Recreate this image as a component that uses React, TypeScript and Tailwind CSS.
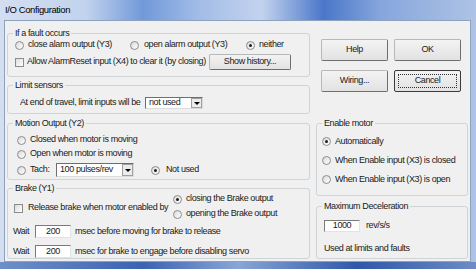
import React from 'react';

// I/O Configuration dialog (Vista-style frame, scaled)

function Radio({ checked = false }: { checked?: boolean }) {
  return (
    <span className="w-[9px] h-[9px] shrink-0 rounded-full border border-[#8c8c8c] bg-[linear-gradient(135deg,#d9d9d9,#ffffff)] flex items-center justify-center">
      {checked && <span className="w-[3px] h-[3px] rounded-full bg-[#1e1e1e]" />}
    </span>
  );
}

function Check() {
  return <span className="w-[9px] h-[9px] shrink-0 border border-[#8c8c8c] bg-[linear-gradient(135deg,#dcdcdc,#ffffff)]" />;
}

function Group({ title, className = '', children }: { title: string; className?: string; children: React.ReactNode }) {
  return (
    <fieldset className={`border border-[#cfd4d8] rounded-[3px] ${className}`}>
      <legend className="ml-[5px] px-[2px] leading-[10px]">{title}</legend>
      {children}
    </fieldset>
  );
}

function Combo({ value, className = '' }: { value: string; className?: string }) {
  return (
    <div className={`flex h-[12px] bg-white border border-t-[#6d6d6d] border-l-[#6d6d6d] border-r-[#dcdcdc] border-b-[#dcdcdc] ${className}`}>
      <span className="flex-1 pl-[3px] flex items-center">{value}</span>
      <span className="w-[11px] bg-[#ececec] border border-[#a0a0a0] flex items-center justify-center">
        <span className="w-0 h-0 border-l-[3px] border-r-[3px] border-t-[3px] border-l-transparent border-r-transparent border-t-black" />
      </span>
    </div>
  );
}

function Field({ value, className = '' }: { value: string; className?: string }) {
  return (
    <div className={`bg-white border border-t-[#7a7a7a] border-l-[#7a7a7a] border-r-[#e3e3e3] border-b-[#e3e3e3] flex items-center justify-center ${className}`}>
      {value}
    </div>
  );
}

function Button({ label, focused = false, className = 'w-[67px] h-[22px]' }: { label: string; focused?: boolean; className?: string }) {
  return (
    <button
      className={`${className} shrink-0 rounded-[2px] bg-[linear-gradient(#f3f3f3,#e2e2e2)] flex items-center justify-center ${
        focused ? 'border border-[#3a3a3a]' : 'border border-[#b8b8b8] border-r-[#6e6e6e] border-b-[#6e6e6e]'
      }`}
    >
      {focused ? (
        <span className="w-[59px] h-[14px] border border-dotted border-[#333] flex items-center justify-center">{label}</span>
      ) : (
        label
      )}
    </button>
  );
}

export default function App() {
  return (
    <div className="w-[476px] h-[269px] overflow-hidden flex flex-col whitespace-nowrap bg-[linear-gradient(90deg,#d3def0_0%,#c2d3ee_18%,#7199da_30%,#a3bde7_42%,#c3d3ee_55%,#4a77c9_68%,#86a6dc_80%,#aec3e6_100%)] font-['Liberation_Sans',Arial,sans-serif] text-[9px] tracking-[-0.4px] text-[#1a1a1a]">
      <div className="h-[20px] shrink-0 pl-[5px] flex items-center text-[9.5px] text-black">I/O Configuration</div>
      <div className="ml-[4px] w-[467px] h-[242px] shrink-0 bg-[#f0f0f0] border border-[#8fa2bd] flex gap-[6px] pl-[2px]">
        {/* left column */}
        <div className="w-[303px] pt-[7px] flex flex-col">
          <Group title="If a fault occurs" className="pb-[6px]">
            <div className="mt-[1px] h-[12px] flex items-center pl-[7px]">
              <div className="w-[115px] flex items-center gap-[4px]">
                <Radio />
                <span>close alarm output (Y3)</span>
              </div>
              <div className="w-[116px] flex items-center gap-[5px]">
                <Radio />
                <span>open alarm output (Y3)</span>
              </div>
              <div className="flex items-center gap-[4px]">
                <Radio checked />
                <span>neither</span>
              </div>
            </div>
            <div className="mt-[3px] h-[16px] flex items-center pl-[7px]">
              <div className="w-[194px] flex items-center gap-[3px]">
                <Check />
                <span>Allow AlarmReset input (X4) to clear it (by closing)</span>
              </div>
              <Button label="Show history..." className="w-[82px] h-[16px]" />
            </div>
          </Group>

          <Group title="Limit sensors" className="mt-[3px] pb-[4px]">
            <div className="mt-[7px] h-[12px] flex items-center pl-[12px]">
              <span className="w-[125px]">At end of travel, limit inputs will be</span>
              <Combo value="not used" className="w-[58px]" />
            </div>
          </Group>

          <Group title="Motion Output (Y2)" className="mt-[4px] pb-[2px]">
            <div className="mt-[5px] h-[14px] flex items-center gap-[4px] pl-[9px]">
              <Radio />
              <span>Closed when motor is moving</span>
            </div>
            <div className="h-[14px] flex items-center gap-[4px] pl-[9px]">
              <Radio />
              <span>Open when motor is moving</span>
            </div>
            <div className="mt-[2px] h-[14px] flex items-center pl-[9px]">
              <Radio />
              <span className="ml-[4px] w-[26px]">Tach:</span>
              <Combo value="100 pulses/rev" className="w-[78px] !h-[14px]" />
              <div className="ml-[17px] flex items-center gap-[6px]">
                <Radio checked />
                <span>Not used</span>
              </div>
            </div>
          </Group>

          <Group title="Brake (Y1)" className="mt-[3px]">
            <div className="flex">
              <div className="w-[165px] flex items-center gap-[5px] pl-[6px] pt-[3px]">
                <Check />
                <span>Release brake when motor enabled by</span>
              </div>
              <div className="flex flex-col gap-[3px]">
                <div className="h-[12px] flex items-center gap-[4px]">
                  <Radio checked />
                  <span>closing the Brake output</span>
                </div>
                <div className="h-[12px] flex items-center gap-[4px]">
                  <Radio />
                  <span>opening the Brake output</span>
                </div>
              </div>
            </div>
            <div className="mt-[5px] flex items-center pl-[5px]">
              <span className="w-[22px]">Wait</span>
              <Field value="200" className="w-[36px] h-[13px]" />
              <span className="ml-[4px]">msec before moving for brake to release</span>
            </div>
            <div className="mt-[6px] flex items-center pl-[5px]">
              <span className="w-[22px]">Wait</span>
              <Field value="200" className="w-[36px] h-[13px]" />
              <span className="ml-[4px]">msec for brake to engage before disabling servo</span>
            </div>
          </Group>
        </div>

        {/* right column */}
        <div className="w-[152px] pt-[18px] flex flex-col">
          <div className="pl-[5px] flex gap-[6px]">
            <Button label="Help" />
            <Button label="OK" />
          </div>
          <div className="mt-[9px] pl-[5px] flex gap-[6px]">
            <Button label="Wiring..." />
            <Button label="Cancel" focused />
          </div>

          <Group title="Enable motor" className="mt-[26px] pb-[9px]">
            <div className="mt-[7px] flex flex-col gap-[6px] pl-[5px]">
              <div className="h-[13px] flex items-center gap-[4px]">
                <Radio checked />
                <span>Automatically</span>
              </div>
              <div className="h-[13px] flex items-center gap-[4px]">
                <Radio />
                <span>When Enable input (X3) is closed</span>
              </div>
              <div className="h-[13px] flex items-center gap-[4px]">
                <Radio />
                <span>When Enable input (X3) is open</span>
              </div>
            </div>
          </Group>

          <Group title="Maximum Deceleration" className="mt-[5px] pb-[3px]">
            <div className="mt-[8px] flex items-center pl-[7px]">
              <Field value="1000" className="w-[36px] h-[12px]" />
              <span className="ml-[6px]">rev/s/s</span>
            </div>
            <div className="mt-[10px] h-[12px] flex items-center pl-[7px]">Used at limits and faults</div>
          </Group>
        </div>
      </div>
      <div className="flex-1 bg-[linear-gradient(90deg,#6f8fc8,#3c63b2_30%,#8aa5d6_50%,#2f58a8_75%,#6d8cc6)]" />
    </div>
  );
}
